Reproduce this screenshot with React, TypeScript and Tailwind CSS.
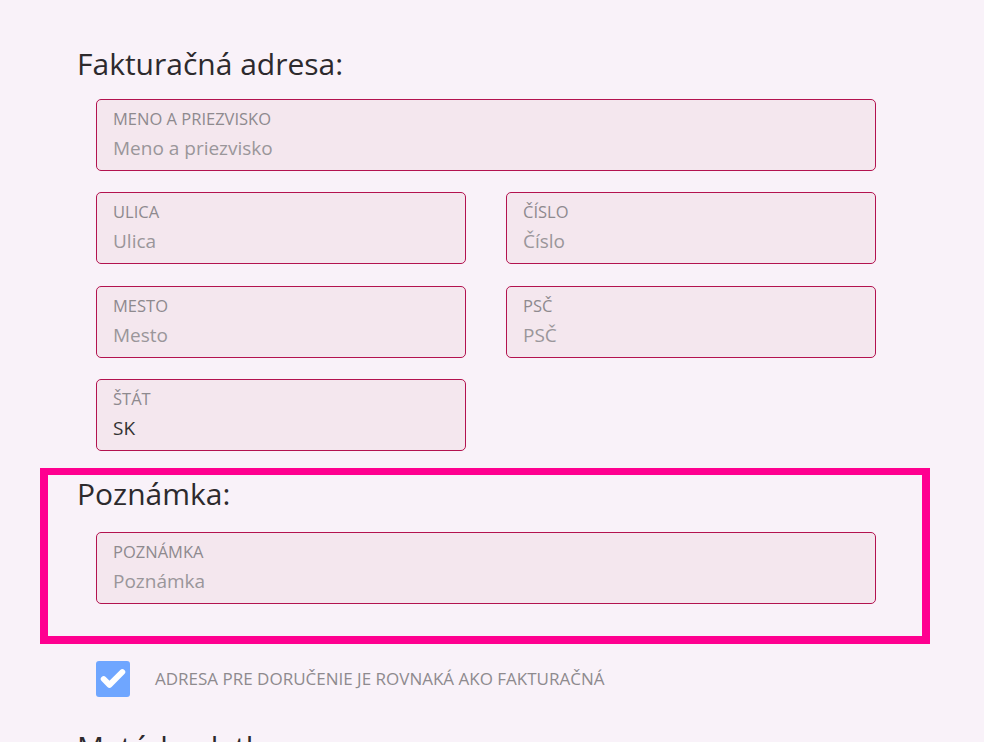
import { Check } from 'lucide-react';

type FieldProps = {
  label: string;
  value: string;
  filled?: boolean;
  className?: string;
};

function Field({ label, value, filled, className }: FieldProps) {
  return (
    <div
      className={`h-[72px] rounded-[5px] border border-[#b3134f] bg-[#f4e7ee] pl-[16px] pt-[9px] ${className ?? ''}`}
    >
      <div className="text-[16.5px] leading-[20px] text-[#8e8a8e]">{label}</div>
      <div
        className={`mt-[7px] text-[19px] leading-[24px] ${filled ? 'text-[#333]' : 'text-[#9a969a]'}`}
      >
        {value}
      </div>
    </div>
  );
}

export default function App() {
  return (
    <div
      className="h-[742px] overflow-hidden bg-[#f9f2f9] pl-[40px] text-[#2d2a2d]"
      style={{ fontFamily: '"Open Sans", "Noto Sans", sans-serif' }}
    >
      <section className="pt-[46px]">
        <h2 className="pl-[37px] text-[30px] leading-[36px] font-normal">Fakturačná adresa:</h2>
        <div className="ml-[56px] mt-[17px] flex w-[780px] flex-col gap-[21px]">
          <Field label="MENO A PRIEZVISKO" value="Meno a priezvisko" />
          <div className="grid grid-cols-2 gap-x-[40px] gap-y-[21.5px]">
            <Field label="ULICA" value="Ulica" />
            <Field label="ČÍSLO" value="Číslo" />
            <Field label="MESTO" value="Mesto" />
            <Field label="PSČ" value="PSČ" />
            <Field label="ŠTÁT" value="SK" filled />
          </div>
        </div>
      </section>

      <section className="mt-[17px] h-[176px] w-[890px] border-[8px] border-t-[7px] border-[#ff0090] pt-[1px]">
        <h2 className="pl-[29px] text-[30px] leading-[36px] font-normal">Poznámka:</h2>
        <Field label="POZNÁMKA" value="Poznámka" className="ml-[48px] mt-[20px] w-[780px]" />
      </section>

      <label className="ml-[56px] mt-[17px] flex items-center gap-[25px]">
        <span className="flex h-[36px] w-[34px] items-center justify-center rounded-[3px] bg-[#6fa6ff]">
          <Check className="h-[28px] w-[28px] text-white" strokeWidth={5} />
        </span>
        <span className="text-[17px] text-[#8e8a8e]">ADRESA PRE DORUČENIE JE ROVNAKÁ AKO FAKTURAČNÁ</span>
      </label>

      <h2 className="mt-[32px] pl-[37px] text-[30px] leading-[36px] font-normal">Metóda platby</h2>
    </div>
  );
}
